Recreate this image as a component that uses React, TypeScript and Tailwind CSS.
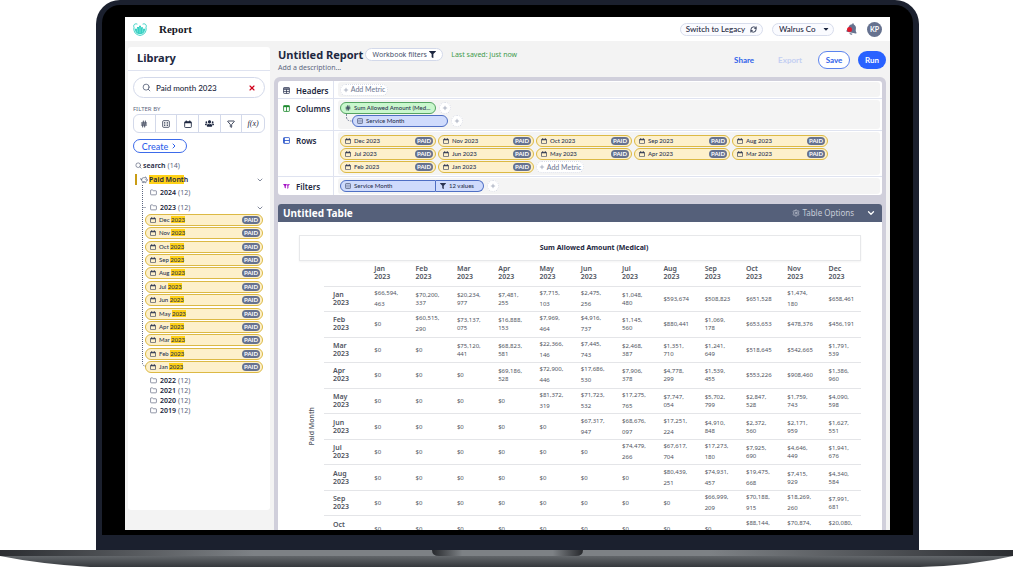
import type { ReactNode } from "react";
import clsx from "clsx";
import {
  ChevronDown,
  ChevronRight,
  Filter,
  Folder,
  Hash,
  PiggyBank,
  Plus,
  RefreshCw,
  Search,
  Settings,
  X,
} from "lucide-react";
import { FaBell, FaCaretDown, FaFilter, FaUsers } from "react-icons/fa";

const months = [
  "Jan",
  "Feb",
  "Mar",
  "Apr",
  "May",
  "Jun",
  "Jul",
  "Aug",
  "Sep",
  "Oct",
  "Nov",
  "Dec",
];
const newestFirst = [...months].reverse();

// "/" breaks a long amount tightly, "|" breaks it with the loose leading
const rows = [
  "$66,594,|463 $70,200,/337 $20,234,/977 $7,481,/255 $7,715,|103 $2,475,|256 $1,048,/480 $593,674 $508,823 $651,528 $1,474,|180 $658,461",
  "$0 $60,515,|290 $73,137,/075 $16,888,/153 $7,969,|464 $4,916,|737 $1,145,/560 $880,441 $1,069,/178 $653,653 $478,376 $456,191",
  "$0 $0 $75,120,/441 $68,823,/581 $22,366,|146 $7,445,|743 $2,468,/387 $1,351,/710 $1,241,/649 $518,645 $542,665 $1,791,/539",
  "$0 $0 $0 $69,186,/528 $72,900,|446 $17,686,|530 $7,906,/378 $4,778,/299 $1,539,/455 $553,226 $908,460 $1,386,/960",
  "$0 $0 $0 $0 $81,372,|319 $71,723,|532 $17,275,|765 $7,747,/054 $5,702,/799 $2,847,/528 $1,759,/743 $4,090,/598",
  "$0 $0 $0 $0 $0 $67,317,|947 $68,676,|097 $17,251,|224 $4,910,/848 $2,372,/560 $2,171,/959 $1,627,/551",
  "$0 $0 $0 $0 $0 $0 $74,479,|266 $67,617,|704 $17,273,|180 $7,925,/690 $4,646,/449 $1,941,/676",
  "$0 $0 $0 $0 $0 $0 $0 $80,439,|251 $74,931,|457 $19,475,|668 $7,415,/929 $4,340,/584",
  "$0 $0 $0 $0 $0 $0 $0 $0 $66,999,|209 $70,188,|915 $18,269,|260 $7,991,/681",
  "$0 $0 $0 $0 $0 $0 $0 $0 $0 $88,144,|205 $70,874,|316 $20,080,|742",
].map((row) => row.split(" "));

function CalendarIcon({ className }: { className?: string }) {
  return (
    <svg viewBox="0 0 12 12" className={clsx("shrink-0", className)} fill="none">
      <rect x="1" y="2.5" width="10" height="8.8" rx="1.2" stroke="currentColor" strokeWidth="1.3" />
      <path d="M1 2.5h10v2.2H1zM2.6.6h1.6v2H2.6zM7.8.6h1.6v2H7.8z" fill="currentColor" />
    </svg>
  );
}

function GridIcon({ className }: { className?: string }) {
  return (
    <svg viewBox="0 0 12 12" className={clsx("shrink-0", className)} fill="none" stroke="currentColor">
      <rect x="1" y="1" width="10" height="10" rx="1.5" strokeWidth="1.1" />
      <path d="M3 4h2M7 4h2M3 6h2M7 6h2M3 8.2h2M7 8.2h2" strokeWidth="1.2" />
    </svg>
  );
}

function Logo() {
  return (
    <svg viewBox="0 0 42 39" className="h-[13px] w-[14px]" fill="none">
      <path
        d="M12 3C5 0 0 7 3 13c-2 14 6 23 18 24 12-1 20-10 18-24 3-6-2-13-9-10"
        stroke="#35d0c3"
        strokeWidth="3"
        strokeLinecap="round"
      />
      <path d="M6 17h6v-5h6V8h6v5h6v4h6c1 9-5 16-15 16S5 26 6 17z" fill="#35d0c3" />
      <path d="M13 16v12M21 12v18M29 16v12" stroke="#bdf3ec" strokeWidth="1.4" />
    </svg>
  );
}

function PaidBadge() {
  return (
    <span className="ml-auto flex h-2 w-[18px] shrink-0 items-center justify-center rounded-full bg-[#66728f] text-[6px] font-bold leading-none text-white">
      PAID
    </span>
  );
}

function Chip({
  tone,
  className,
  children,
}: {
  tone: "yellow" | "green" | "blue";
  className?: string;
  children: ReactNode;
}) {
  return (
    <button
      type="button"
      className={clsx(
        "flex h-3 items-center gap-[3px] rounded-full border pl-1 pr-[2px] text-[6px] font-medium leading-none whitespace-nowrap text-[#2a3350]",
        tone === "yellow" && "border-[#dcb944] bg-[#fdf0cb]",
        tone === "green" && "border-[#55a362] bg-[#c9f7cd]",
        tone === "blue" && "border-[#4f6fc4] bg-[#cfdbfc]",
        className,
      )}
    >
      {children}
    </button>
  );
}

function AddButton() {
  return (
    <button
      type="button"
      aria-label="Add"
      className="flex size-3 shrink-0 items-center justify-center rounded-full border border-dotted border-[#d9dce6] bg-white text-[#6b7590]"
    >
      <Plus className="size-[6px]" />
    </button>
  );
}

function AddMetric() {
  return (
    <button
      type="button"
      className="flex h-3 w-12 items-center justify-center gap-[2px] rounded-full border border-dotted border-[#d9dce6] bg-white text-[7px] leading-none whitespace-nowrap text-[#6b7590]"
    >
      <Plus className="size-[6px] shrink-0" />
      Add Metric
    </button>
  );
}

function Shelf({
  label,
  icon,
  className,
  children,
}: {
  label: string;
  icon: ReactNode;
  className?: string;
  children: ReactNode;
}) {
  return (
    <div className="flex border-b border-[#dfe3f0] last:border-b-0">
      <div className="flex w-14 shrink-0 items-start gap-[6px] border-r border-[#dfe3f0] pl-[5px] pt-[5px]">
        {icon}
        <h3 className="font-['Noto_Sans'] text-[8px] leading-[10px] font-semibold text-[#1d2740]">{label}</h3>
      </div>
      <div className={clsx("my-px ml-1 mr-[2px] flex-1 rounded-[3px] bg-[#f4f4f4] px-[2px] py-px", className)}>
        {children}
      </div>
    </div>
  );
}

function FolderRow({ year, className, children }: { year: string; className?: string; children?: ReactNode }) {
  return (
    <div className={clsx("flex items-center pl-[17px] font-['Noto_Sans'] text-[7px] leading-none", className)}>
      <Folder className="mr-[3px] size-[7px] text-[#46506b]" />
      <span className="font-semibold text-[#1d2740]">{year}</span>
      <span className="ml-[2px] text-[#5d6780]">(12)</span>
      {children}
    </div>
  );
}

function TopBar() {
  return (
    <header className="flex h-6 shrink-0 items-center bg-white pl-2 pr-2 text-[8px] text-[#1d2740]">
      <Logo />
      <span className="ml-3 font-['Liberation_Serif'] text-[11px] font-bold text-[#15181f]">Report</span>
      <button
        type="button"
        className="ml-auto flex h-[13px] w-[83px] items-center justify-center gap-[5px] rounded-full border border-[#d8ddec] bg-[#fafbff] leading-none font-medium"
      >
        Switch to Legacy
        <RefreshCw className="size-[7px]" strokeWidth={3} />
      </button>
      <div className="relative ml-[9px] flex w-[62px]">
        <select
          aria-label="Company"
          className="h-[13px] w-full appearance-none rounded-full border border-[#d8ddec] bg-[#fafbff] pl-[6px] leading-none font-medium"
        >
          <option>Walrus Co</option>
        </select>
        <FaCaretDown className="pointer-events-none absolute right-1 top-[2px] size-2" />
      </div>
      <button type="button" aria-label="Notifications" className="relative ml-3">
        <FaBell className="size-[12px] rotate-12 text-[#66728f]" />
        <span className="absolute left-px top-1 size-[5px] rounded-full bg-[#e0192d]" />
      </button>
      <button
        type="button"
        className="ml-[9px] flex size-[15px] items-center justify-center rounded-full bg-[#66728f] text-[7px] leading-none font-bold text-white"
      >
        KP
      </button>
    </header>
  );
}

function Library() {
  const filters = [
    { name: "Numbers", icon: <Hash className="size-2" strokeWidth={2.5} /> },
    { name: "Categories", icon: <GridIcon className="size-2" /> },
    { name: "Dates", icon: <CalendarIcon className="size-2" /> },
    { name: "Groups", icon: <FaUsers className="size-[9px]" /> },
    { name: "Filters", icon: <Filter className="size-2" strokeWidth={2.5} /> },
    {
      name: "Functions",
      icon: <span className="font-['Liberation_Serif'] text-[8px] leading-none italic">f(x)</span>,
    },
  ];

  return (
    <aside className="mb-5 ml-[3px] mt-[6px] w-[142px] shrink-0 rounded-[3px] bg-white">
      <h2 className="flex h-6 items-center border-b border-[#dfe3f0] pl-[9px] font-['Noto_Sans'] text-[11px] font-bold text-[#1d2740]">
        Library
      </h2>
      <div className="flex flex-col px-[5px]">
        <div className="mt-[6px] flex h-[21px] items-center rounded-full border border-[#d3d9ea] pl-2 pr-2">
          <Search className="size-[9px] shrink-0 text-[#46506b]" />
          <input
            aria-label="Search library"
            defaultValue="Paid month 2023"
            className="ml-[5px] w-full min-w-0 text-[8px] leading-none font-medium text-[#1d2740] outline-none"
          />
          <button type="button" aria-label="Clear search">
            <X className="size-2 text-[#d0021b]" strokeWidth={3.5} />
          </button>
        </div>

        <p className="mt-[7px] h-2 font-['Noto_Sans'] text-[6px] leading-[8px] text-[#5d6780]">FILTER BY</p>
        <div className="mt-px grid h-[19px] grid-cols-6 divide-x divide-[#d3d9ea] rounded-[6px] border border-[#d3d9ea] text-[#1d2740]">
          {filters.map((filter) => (
            <button key={filter.name} type="button" aria-label={filter.name} className="flex items-center justify-center">
              {filter.icon}
            </button>
          ))}
        </div>

        <button
          type="button"
          className="mt-[6px] flex h-[14px] w-[54px] items-center justify-center gap-[2px] rounded-full border border-[#3d6bea] text-[9px] leading-none font-medium text-[#2f62ea]"
        >
          Create
          <ChevronRight className="size-2" strokeWidth={3} />
        </button>

        <div className="mt-[6px] flex h-3 items-center pl-[2px] font-['Noto_Sans'] text-[7px] leading-none">
          <Search className="mr-px size-[7px] text-[#46506b]" />
          <span className="font-semibold text-[#1d2740]">search</span>
          <span className="ml-[2px] text-[#5d6780]">(14)</span>
        </div>

        <div className="ml-[2px] mt-[3px] flex h-[11px] items-center border-l-2 border-[#c99c14] pl-[3px] pr-px font-['Noto_Sans'] text-[7px] leading-none font-semibold text-[#1d2740]">
          <PiggyBank className="mr-px size-2 text-[#46506b]" />
          <span>
            <mark className="bg-[#ffd117] text-inherit">Paid Mont</mark>h
          </span>
          <ChevronDown className="ml-auto size-2 text-[#46506b]" />
        </div>

        <div className="relative">
          <svg
            className="absolute left-[9px] top-0 h-[182px] w-1"
            fill="none"
            stroke="#5d6780"
            strokeDasharray="1 1"
            aria-hidden="true"
          >
            <path d="M.5 0v178q0 3 3 3M.5 22.500h4" />
          </svg>
          <FolderRow year="2024" className="mt-[2px] h-[11px]" />
          <FolderRow year="2023" className="mt-1 h-[11px]">
            <ChevronDown className="ml-auto mr-px size-2 text-[#46506b]" />
          </FolderRow>
          <ul className="ml-3 mr-[2px] mt-px flex h-[159px] flex-col justify-between">
            {newestFirst.map((month) => (
              <li key={month}>
                <Chip tone="yellow" className="w-full">
                  <CalendarIcon className="size-[6px]" />
                  <span>
                    {month} <mark className="bg-[#ffd117] text-inherit">2023</mark>
                  </span>
                  <PaidBadge />
                </Chip>
              </li>
            ))}
          </ul>
          <div className="mt-[2px]">
            {["2022", "2021", "2020", "2019"].map((year) => (
              <FolderRow key={year} year={year} className="h-[10px]" />
            ))}
          </div>
        </div>
      </div>
    </aside>
  );
}

function ReportHeader() {
  return (
    <div className="flex h-9 shrink-0 items-center pl-1">
      <div className="pt-[3px] font-['Noto_Sans'] text-[7px]">
        <div className="flex h-[14px] items-center">
          <h1 className="text-[11px] leading-none font-bold whitespace-nowrap text-[#1d2740]">Untitled Report</h1>
          <button
            type="button"
            className="ml-[2px] flex h-[13px] w-[78px] items-center justify-center gap-[2px] rounded-full border border-[#d3d9ea] bg-white leading-none text-[#46506b]"
          >
            Workbook filters
            <FaFilter className="size-[7px] text-[#1d2740]" />
          </button>
          <span className="ml-2 leading-none text-[#3f9a4c]">Last saved: just now</span>
        </div>
        <p className="leading-[12px] text-[#5d6780]">Add a description...</p>
      </div>
      <div className="ml-auto flex items-center pt-px text-[8px] leading-none font-bold">
        <button type="button" className="text-[#2f62ea]">
          Share
        </button>
        <button type="button" disabled className="ml-6 text-[#c3cff2]">
          Export
        </button>
        <button
          type="button"
          className="ml-4 h-[18px] w-8 rounded-full border border-[#5b83ee] bg-white text-[#2f62ea]"
        >
          Save
        </button>
        <button type="button" className="ml-2 h-[18px] w-7 rounded-full bg-[#2962ff] text-white">
          Run
        </button>
      </div>
    </div>
  );
}

function Shelves() {
  return (
    <section className="rounded-[3px] bg-white">
      <Shelf
        label="Headers"
        icon={
          <svg viewBox="0 0 12 12" className="mt-px size-[7px]" fill="none" stroke="#2a3350" strokeWidth="1.3">
            <rect x="1" y="1" width="10" height="10" rx="1" />
            <path d="M1 4.2h10M1 7.6h10M6 4v7M1 2.2h10" />
          </svg>
        }
      >
        <div className="flex h-[13px] items-center">
          <AddMetric />
        </div>
      </Shelf>
      <Shelf
        label="Columns"
        icon={
          <svg viewBox="0 0 12 12" className="mt-px size-[7px]" fill="none" stroke="#1e8a2e" strokeWidth="1.4">
            <rect x="1" y="1" width="10" height="10" rx="1" />
            <path d="M6 3v8" />
            <path d="M1 2.4h10" strokeWidth="2.6" />
          </svg>
        }
      >
        <div className="flex items-center gap-[3px] pt-px">
          <Chip tone="green" className="w-24">
            <Hash className="size-[6px] shrink-0" strokeWidth={3} />
            Sum Allowed Amount (Med...
          </Chip>
          <AddButton />
        </div>
        <div className="flex h-[14px] items-center gap-[3px]">
          <svg className="-mr-[3px] h-[14px] w-3" fill="none" stroke="#7d869c" aria-hidden="true">
            <path d="M6.500 0v3q0 4 5 4" strokeDasharray="2 1" />
          </svg>
          <Chip tone="blue" className="w-24">
            <GridIcon className="size-[6px]" />
            Service Month
          </Chip>
          <AddButton />
        </div>
      </Shelf>
      <Shelf
        label="Rows"
        icon={
          <svg viewBox="0 0 12 12" className="mt-px size-[7px]" fill="none" stroke="#2350c8" strokeWidth="1.4">
            <rect x="1" y="1" width="10" height="10" rx="1" />
            <path d="M1 6h10" />
            <path d="M2 1.6v8.800" strokeWidth="2" />
          </svg>
        }
      >
        <div className="flex max-w-[500px] flex-wrap gap-x-[2px] gap-y-px pt-[2px] pb-px">
          {newestFirst.map((month) => (
            <Chip key={month} tone="yellow" className="w-24">
              <CalendarIcon className="size-[6px]" />
              {month} 2023
              <PaidBadge />
            </Chip>
          ))}
          <AddMetric />
        </div>
      </Shelf>
      <Shelf
        label="Filters"
        icon={
          <svg viewBox="0 0 14 12" className="mt-px h-[7px] w-[7px]" fill="#a310c4">
            <path d="M0 1h8L5.600 5v5L3 8V5z" />
            <path d="M9 1h5l-3 4.200v4L8.400 11V5.200L7.400 4z" opacity=".8" />
          </svg>
        }
      >
        <div className="flex h-[14px] items-center gap-[3px]">
          <div className="flex">
            <Chip tone="blue" className="w-24 rounded-r-none">
              <GridIcon className="size-[6px]" />
              Service Month
            </Chip>
            <Chip tone="blue" className="w-12 rounded-l-none border-l-0">
              <FaFilter className="size-[6px]" />
              12 values
            </Chip>
          </div>
          <AddButton />
        </div>
      </Shelf>
    </section>
  );
}

function Amount({ value }: { value: string }) {
  const loose = value.includes("|");
  const [first, second] = value.split(loose ? "|" : "/");
  return (
    <span className={clsx("block", loose ? "leading-[11px]" : "leading-[8px]")}>
      {first}
      {second && <br />}
      {second}
    </span>
  );
}

function ReportTable() {
  return (
    <section className="mt-[9px] flex-1 rounded-t-[3px] bg-white">
      <div className="flex h-[18px] items-center rounded-t-[3px] bg-[#55607a] pl-[5px] pr-[6px] font-['Noto_Sans'] text-white">
        <h2 className="text-[10px] leading-none font-bold">Untitled Table</h2>
        <button type="button" className="ml-auto flex items-center gap-[2px] text-[8px] leading-none text-[#c7ccd8]">
          <Settings className="size-2" />
          Table Options
        </button>
        <button type="button" aria-label="Collapse table" className="ml-3">
          <ChevronDown className="size-[10px]" strokeWidth={3} />
        </button>
      </div>

      <div className="px-[21px] pt-[13px] font-['Noto_Sans'] text-[#50545e]">
        <h3 className="flex h-[26px] items-center justify-center border border-[#e7e8ea] pl-7 text-[7px] font-bold text-[#1d2740] shadow-xs">
          Sum Allowed Amount (Medical)
        </h3>
        <div className="flex items-center">
          <div className="flex w-[25px] shrink-0 justify-center pt-[50px]">
            <span className="rotate-180 text-[7px] leading-none font-medium [writing-mode:vertical-rl]">Paid Month</span>
          </div>
          <table className="h-[281px] w-full table-fixed text-left">
            <thead>
              <tr className="h-[25px] border-b border-[#e4e5e8]">
                <td />
                {months.map((month) => (
                  <th key={month} scope="col" className="pl-[9px] text-[7px] leading-[8px] font-semibold">
                    {month}
                    <br />
                    2023
                  </th>
                ))}
              </tr>
            </thead>
            <tbody>
              {rows.map((row, idx) => (
                <tr key={months[idx]} className="h-[25px] border-b border-[#e4e5e8]">
                  <th scope="row" className="pl-[9px] text-[7px] leading-[8px] font-semibold">
                    {months[idx]}
                    <br />
                    2023
                  </th>
                  {row.map((value, col) => (
                    <td key={months[col]} className="pl-[9px] text-[6px]">
                      <Amount value={value} />
                    </td>
                  ))}
                </tr>
              ))}
            </tbody>
          </table>
        </div>
      </div>
    </section>
  );
}

function LaptopBase() {
  return (
    <svg viewBox="0 0 1013 17" preserveAspectRatio="none" className="block h-[17px] w-full shrink-0" aria-hidden="true">
      <defs>
        <linearGradient id="lip">
          <stop offset="0" stopColor="#2b2d31" />
          <stop offset=".25" stopColor="#7d8185" />
          <stop offset=".7" stopColor="#7d8185" />
          <stop offset="1" stopColor="#2b2d31" />
        </linearGradient>
        <linearGradient id="under" x2="0" y2="1">
          <stop offset="0" stopColor="#63676b" />
          <stop offset="1" stopColor="#35383c" />
        </linearGradient>
        <linearGradient id="notch">
          <stop offset="0" stopColor="#26282c" />
          <stop offset=".2" stopColor="#7d8185" />
          <stop offset=".8" stopColor="#7d8185" />
          <stop offset="1" stopColor="#26282c" />
        </linearGradient>
      </defs>
      <path d="M0 6h1013Q970 16 920 17H90Q40 14 0 6z" fill="url(#under)" />
      <path d="M0 0h1013v6H0z" fill="url(#lip)" />
      <path d="M432 0h151q0 6-7 6H439q-7 0-7-6z" fill="url(#notch)" />
    </svg>
  );
}

export default function App() {
  return (
    <div className="flex h-screen flex-col overflow-hidden bg-white font-['Lato',sans-serif]">
      <div className="ml-24 mr-[94px] flex min-h-0 flex-1 flex-col rounded-t-[24px] bg-[#1b202e] px-[6px] pb-[15px] pt-[5px]">
        <div className="flex min-h-0 flex-1 flex-col rounded-t-[18px] bg-black px-[23px] pb-[5px] pt-3">
          <div className="flex min-h-0 flex-1 flex-col overflow-hidden bg-[#f3f3f3]">
            <TopBar />
            <div className="flex min-h-0 flex-1">
              <Library />
              <main className="ml-1 mr-1 flex min-w-0 flex-1 flex-col">
                <ReportHeader />
                <div className="flex min-h-0 flex-1 flex-col rounded-t-[6px] bg-[#d0cfdb] px-1 pt-1">
                  <Shelves />
                  <ReportTable />
                </div>
              </main>
            </div>
          </div>
        </div>
      </div>
      <LaptopBase />
    </div>
  );
}
